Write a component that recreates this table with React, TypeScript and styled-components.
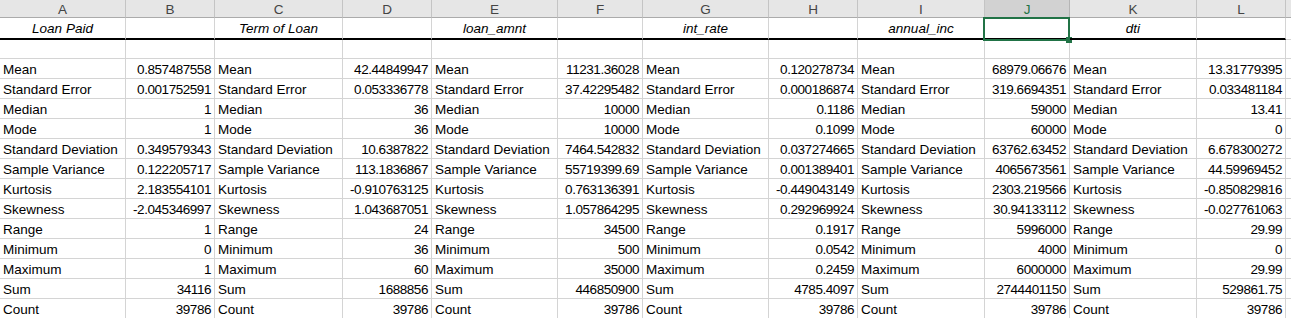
import styled, { createGlobalStyle } from 'styled-components'

const widths = [126, 89, 128, 89, 126, 85, 126, 89, 127, 85, 127, 89]
const letters = ['A', 'B', 'C', 'D', 'E', 'F', 'G', 'H', 'I', 'J', 'K', 'L']
const selectedCol = 9

const labels = [
	'Mean',
	'Standard Error',
	'Median',
	'Mode',
	'Standard Deviation',
	'Sample Variance',
	'Kurtosis',
	'Skewness',
	'Range',
	'Minimum',
	'Maximum',
	'Sum',
	'Count',
]

const groups = [
	{
		title: 'Loan Paid',
		values: ['0.857487558', '0.001752591', '1', '1', '0.349579343', '0.122205717', '2.183554101', '-2.045346997', '1', '0', '1', '34116', '39786'],
	},
	{
		title: 'Term of Loan',
		values: ['42.44849947', '0.053336778', '36', '36', '10.6387822', '113.1836867', '-0.910763125', '1.043687051', '24', '36', '60', '1688856', '39786'],
	},
	{
		title: 'loan_amnt',
		values: ['11231.36028', '37.42295482', '10000', '10000', '7464.542832', '55719399.69', '0.763136391', '1.057864295', '34500', '500', '35000', '446850900', '39786'],
	},
	{
		title: 'int_rate',
		values: ['0.120278734', '0.000186874', '0.1186', '0.1099', '0.037274665', '0.001389401', '-0.449043149', '0.292969924', '0.1917', '0.0542', '0.2459', '4785.4097', '39786'],
	},
	{
		title: 'annual_inc',
		values: ['68979.06676', '319.6694351', '59000', '60000', '63762.63452', '4065673561', '2303.219566', '30.94133112', '5996000', '4000', '6000000', '2744401150', '39786'],
	},
	{
		title: 'dti',
		values: ['13.31779395', '0.033481184', '13.41', '0', '6.678300272', '44.59969452', '-0.850829816', '-0.027761063', '29.99', '0', '29.99', '529861.75', '39786'],
	},
]

export default function App() {
	return (
		<>
			<GlobalStyle />
			<Sheet>
				{letters.map((l, i) => (
					<ColHeader key={l} $selected={i === selectedCol}>
						{l}
					</ColHeader>
				))}
				<ColHeader />

				{groups.map((g, i) => [
					<TitleCell key={'t' + i}>{g.title}</TitleCell>,
					<TitleCell key={'v' + i}>
						{i * 2 + 1 === selectedCol && (
							<Selection>
								<Handle />
							</Selection>
						)}
					</TitleCell>,
				])}
				<Cell />

				{letters.map((l) => (
					<SpacerCell key={'s' + l} />
				))}
				<SpacerCell />

				{labels.map((label, r) =>
					groups
						.map((g, i) => [
							<Cell key={`l${r}-${i}`}>{label}</Cell>,
							<Cell key={`n${r}-${i}`} $num>
								{g.values[r]}
							</Cell>,
						])
						.flat()
						.concat(<Cell key={`m${r}`} />)
				)}
			</Sheet>
		</>
	)
}

const GlobalStyle = createGlobalStyle`
	html, body {
		margin: 0;
		padding: 0;
		background: #ffffff;
		overflow: hidden;
	}
	body {
		font-family: 'Liberation Sans', Arial, sans-serif;
	}
`

const Sheet = styled.div`
	display: grid;
	grid-template-columns: ${widths.map((w) => w + 'px').join(' ')} 1fr;
	grid-auto-rows: 20px;
	grid-template-rows: 18px 22px 19px;
	width: 1291px;
	font-size: 13.5px;
	color: #000000;
`

const ColHeader = styled.div<{ $selected?: boolean }>`
	box-sizing: border-box;
	display: flex;
	align-items: center;
	justify-content: center;
	background: ${(p) => (p.$selected ? '#d2d2d2' : '#e6e6e6')};
	color: ${(p) => (p.$selected ? '#217346' : '#444444')};
	border-right: 1px solid ${(p) => (p.$selected ? '#b5b5b5' : '#c4c4c4')};
	border-bottom: 1px solid ${(p) => (p.$selected ? '#217346' : '#ababab')};
	font-size: 13.5px;
	padding-top: 1px;
`

const Cell = styled.div<{ $num?: boolean }>`
	box-sizing: border-box;
	border-right: 1px solid #d4d4d4;
	border-bottom: 1px solid #d4d4d4;
	padding: 1px 3px 0 3px;
	display: flex;
	align-items: center;
	justify-content: ${(p) => (p.$num ? 'flex-end' : 'flex-start')};
	letter-spacing: ${(p) => (p.$num ? '-0.45px' : '0')};
	white-space: nowrap;
`

const TitleCell = styled.div`
	position: relative;
	box-sizing: border-box;
	border-right: 1px solid #d4d4d4;
	border-bottom: 2px solid #000000;
	display: flex;
	align-items: center;
	justify-content: center;
	font-style: italic;
	white-space: nowrap;
	padding-top: 1px;
`

const SpacerCell = styled.div`
	box-sizing: border-box;
	border-right: 1px solid #d4d4d4;
	border-bottom: 1px solid #d4d4d4;
`

const Selection = styled.div`
	position: absolute;
	left: -2px;
	right: -1px;
	top: -1px;
	bottom: -3px;
	border: 2px solid #217346;
`

const Handle = styled.div`
	position: absolute;
	right: -4px;
	bottom: -4px;
	width: 6px;
	height: 6px;
	background: #217346;
`
